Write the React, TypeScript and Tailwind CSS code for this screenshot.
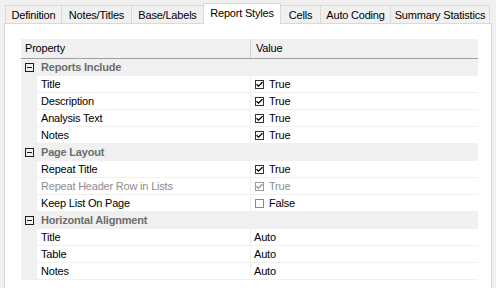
import React from "react";

type Row =
  | { kind: "cat"; label: string }
  | { kind: "bool"; label: string; value: boolean; disabled?: boolean }
  | { kind: "text"; label: string; value: string };

const ROWS: Row[] = [
  { kind: "cat", label: "Reports Include" },
  { kind: "bool", label: "Title", value: true },
  { kind: "bool", label: "Description", value: true },
  { kind: "bool", label: "Analysis Text", value: true },
  { kind: "bool", label: "Notes", value: true },
  { kind: "cat", label: "Page Layout" },
  { kind: "bool", label: "Repeat Title", value: true },
  { kind: "bool", label: "Repeat Header Row in Lists", value: true, disabled: true },
  { kind: "bool", label: "Keep List On Page", value: false },
  { kind: "cat", label: "Horizontal Alignment" },
  { kind: "text", label: "Title", value: "Auto" },
  { kind: "text", label: "Table", value: "Auto" },
  { kind: "text", label: "Notes", value: "Auto" },
];

const TABS = [
  { label: "Definition", w: "w-[56px]" },
  { label: "Notes/Titles", w: "w-[70px]" },
  { label: "Base/Labels", w: "w-[72px]" },
  { label: "Report Styles", w: "w-[78px]", active: true },
  { label: "Cells", w: "w-[39px]", noLeft: true },
  { label: "Auto Coding", w: "w-[70px]" },
  { label: "Summary Statistics", w: "w-[100px]", last: true },
];

function CheckBox({ checked, disabled }: { checked: boolean; disabled?: boolean }) {
  return (
    <span
      className={`flex items-center justify-center w-[9px] h-[9px] border bg-white ${
        disabled ? "border-[#9a9a9a]" : checked ? "border-[#333333]" : "border-[#8a8a8a]"
      }`}
    >
      {checked && (
        <svg width="7" height="7" viewBox="0 0 7 7">
          <path
            d="M0.5 3.2 L2.5 5.2 L6.5 1.2"
            fill="none"
            stroke={disabled ? "#8d8d8d" : "#000"}
            strokeWidth="1.3"
          />
        </svg>
      )}
    </span>
  );
}

function MinusBox() {
  return (
    <span className="flex items-center justify-center w-[9px] h-[9px] border border-[#1e1e1e]">
      <span className="w-[5px] h-px bg-[#1e1e1e]" />
    </span>
  );
}

export default function App() {
  return (
    <div
      className="w-[496px] h-[288px] bg-[#f0f0f0] overflow-hidden text-[11px] tracking-[-0.2px] text-black"
      style={{ fontFamily: '"Liberation Sans", Arial, sans-serif' }}
    >
      {/* Tab strip */}
      <div className="flex items-end h-[23px] pl-[5px]">
        {TABS.map((t) =>
          t.active ? (
            <div
              key={t.label}
              className={`${t.w} h-[21px] -mb-px relative z-10 bg-white border-t border-l border-r border-[#d9d9d9] flex items-start justify-center pt-[2px] leading-[14px]`}
            >
              {t.label}
            </div>
          ) : (
            <div
              key={t.label}
              className={`${t.w} h-[18px] bg-[#f0f0f0] border-t border-[#d9d9d9] ${
                t.noLeft ? "" : "border-l"
              } ${t.last ? "border-r" : ""} flex items-center justify-center leading-[14px] pt-px`}
            >
              {t.label}
            </div>
          )
        )}
      </div>

      {/* Panel */}
      <div className="ml-[4px] w-[488px] h-[270px] bg-white border border-[#d9d9d9] pt-[15px] pl-[16px]">
        <div className="w-[457px] bg-[#f0f0f0]">
          {/* Header */}
          <div className="flex h-[20px] border-b border-[#a0a0a0]">
            <div className="w-[230px] border-r border-[#d0d0d0] pl-[4px] flex items-center">Property</div>
            <div className="flex-1 pl-[5px] flex items-center">Value</div>
          </div>

          {ROWS.map((r, i) =>
            r.kind === "cat" ? (
              <div key={i} className="flex items-center h-[17px]">
                <div className="w-[16px] flex justify-center pl-px">
                  <MinusBox />
                </div>
                <span className="pl-[4px] font-bold text-[#6d6d6d]">{r.label}</span>
              </div>
            ) : (
              <div key={i} className="flex h-[17px] pb-px">
                <div className="w-[16px]" />
                <div
                  className={`w-[213px] bg-white pl-[4px] flex items-center ${
                    r.kind === "bool" && r.disabled ? "text-[#8d8d8d]" : ""
                  }`}
                >
                  {r.label}
                </div>
                <div className="w-px" />
                <div className="flex-1 bg-white flex items-center">
                  {r.kind === "bool" ? (
                    <div className={`flex items-center pl-[4px] gap-[5px] ${r.disabled ? "text-[#8d8d8d]" : ""}`}>
                      <CheckBox checked={r.value} disabled={r.disabled} />
                      <span>{r.value ? "True" : "False"}</span>
                    </div>
                  ) : (
                    <span className="pl-[3px]">{r.value}</span>
                  )}
                </div>
              </div>
            )
          )}
        </div>
      </div>
    </div>
  );
}
